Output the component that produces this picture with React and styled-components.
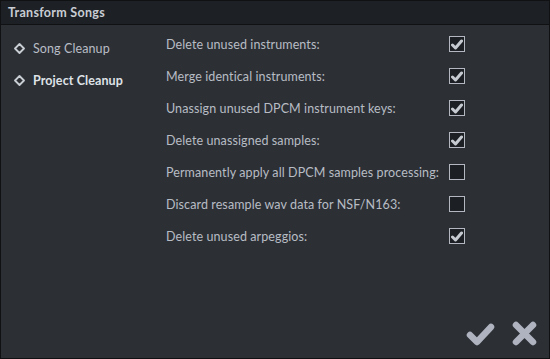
import React from "react";
import styled, { createGlobalStyle } from "styled-components";

const Global = createGlobalStyle`
  html, body { margin: 0; padding: 0; background: #141618; }
  body { font-family: "Lato", "Noto Sans", sans-serif; }
`;

const Dialog = styled.div`
  width: 550px;
  height: 359px;
  box-sizing: border-box;
  border: 1px solid #0f1113;
  background: #2c3035;
  display: flex;
  flex-direction: column;
`;

const TitleBar = styled.div`
  height: 23px;
  background: #1d2125;
  border-bottom: 1px solid #0f1113;
  display: flex;
  align-items: center;
  padding-left: 7px;
  color: #c9cdd4;
  font-size: 12.5px;
  letter-spacing: 0.3px;
  font-weight: 700;
  flex: none;
`;

const Body = styled.div`
  flex: 1;
  display: flex;
  position: relative;
`;

const Sidebar = styled.div`
  width: 165px;
  padding-top: 15px;
  display: flex;
  flex-direction: column;
  gap: 15px;
  flex: none;
`;

const NavItem = styled.div`
  display: flex;
  align-items: center;
  height: 17px;
  padding-left: 13px;
  gap: 8px;
  font-size: 12.5px;
  letter-spacing: 0.1px;
  font-weight: ${(p) => (p.$active ? 700 : 400)};
  color: ${(p) => (p.$active ? "#dfe2e7" : "#b9bdc5")};
`;

const Options = styled.div`
  padding-top: 11px;
  display: flex;
  flex-direction: column;
  gap: 16px;
`;

const Row = styled.div`
  display: grid;
  grid-template-columns: 283px 16px;
  align-items: center;
  height: 16px;
`;

const Label = styled.span`
  font-size: 12.5px;
  letter-spacing: 0.1px;
  color: #b8bcc4;
  white-space: nowrap;
`;

const Box = styled.div`
  width: 16px;
  height: 16px;
  box-sizing: border-box;
  border: 1px solid #b3b7bf;
  background: #1c1f23;
  display: flex;
  align-items: center;
  justify-content: center;
`;

const Footer = styled.div`
  position: absolute;
  right: 11px;
  bottom: 11px;
  display: flex;
  gap: 16px;
`;

const Diamond = () => (
  <svg width="11" height="11" viewBox="0 0 11 11">
    <path d="M5.5 1 L10 5.5 L5.5 10 L1 5.5 Z" fill="none" stroke="#c9cdd4" strokeWidth="1.8" strokeLinejoin="round" />
  </svg>
);

const Tick = () => (
  <svg width="12" height="11" viewBox="0 0 12 11">
    <path d="M1.5 6 L4.5 9 L10.5 2" fill="none" stroke="#c5c9d0" strokeWidth="3" strokeLinecap="round" strokeLinejoin="round" />
  </svg>
);

const BigTick = () => (
  <svg width="29" height="26" viewBox="0 0 29 26">
    <path d="M4 15 L11 22 L25 7" fill="none" stroke="#aeb3bf" strokeWidth="6.5" strokeLinecap="round" strokeLinejoin="round" />
  </svg>
);

const BigCross = () => (
  <svg width="27" height="27" viewBox="0 0 27 27">
    <path d="M5 5 L22 22 M22 5 L5 22" fill="none" stroke="#aeb3bf" strokeWidth="6.5" strokeLinecap="round" />
  </svg>
);

const options = [
  ["Delete unused instruments:", true],
  ["Merge identical instruments:", true],
  ["Unassign unused DPCM instrument keys:", true],
  ["Delete unassigned samples:", true],
  ["Permanently apply all DPCM samples processing:", false],
  ["Discard resample wav data for NSF/N163:", false],
  ["Delete unused arpeggios:", true],
];

export default function App() {
  return (
    <>
      <Global />
      <Dialog>
        <TitleBar>Transform Songs</TitleBar>
        <Body>
          <Sidebar>
            <NavItem>
              <Diamond />
              Song Cleanup
            </NavItem>
            <NavItem $active>
              <Diamond />
              Project Cleanup
            </NavItem>
          </Sidebar>
          <Options>
            {options.map(([label, checked]) => (
              <Row key={label}>
                <Label>{label}</Label>
                <Box>{checked && <Tick />}</Box>
              </Row>
            ))}
          </Options>
          <Footer>
            <BigTick />
            <BigCross />
          </Footer>
        </Body>
      </Dialog>
    </>
  );
}
